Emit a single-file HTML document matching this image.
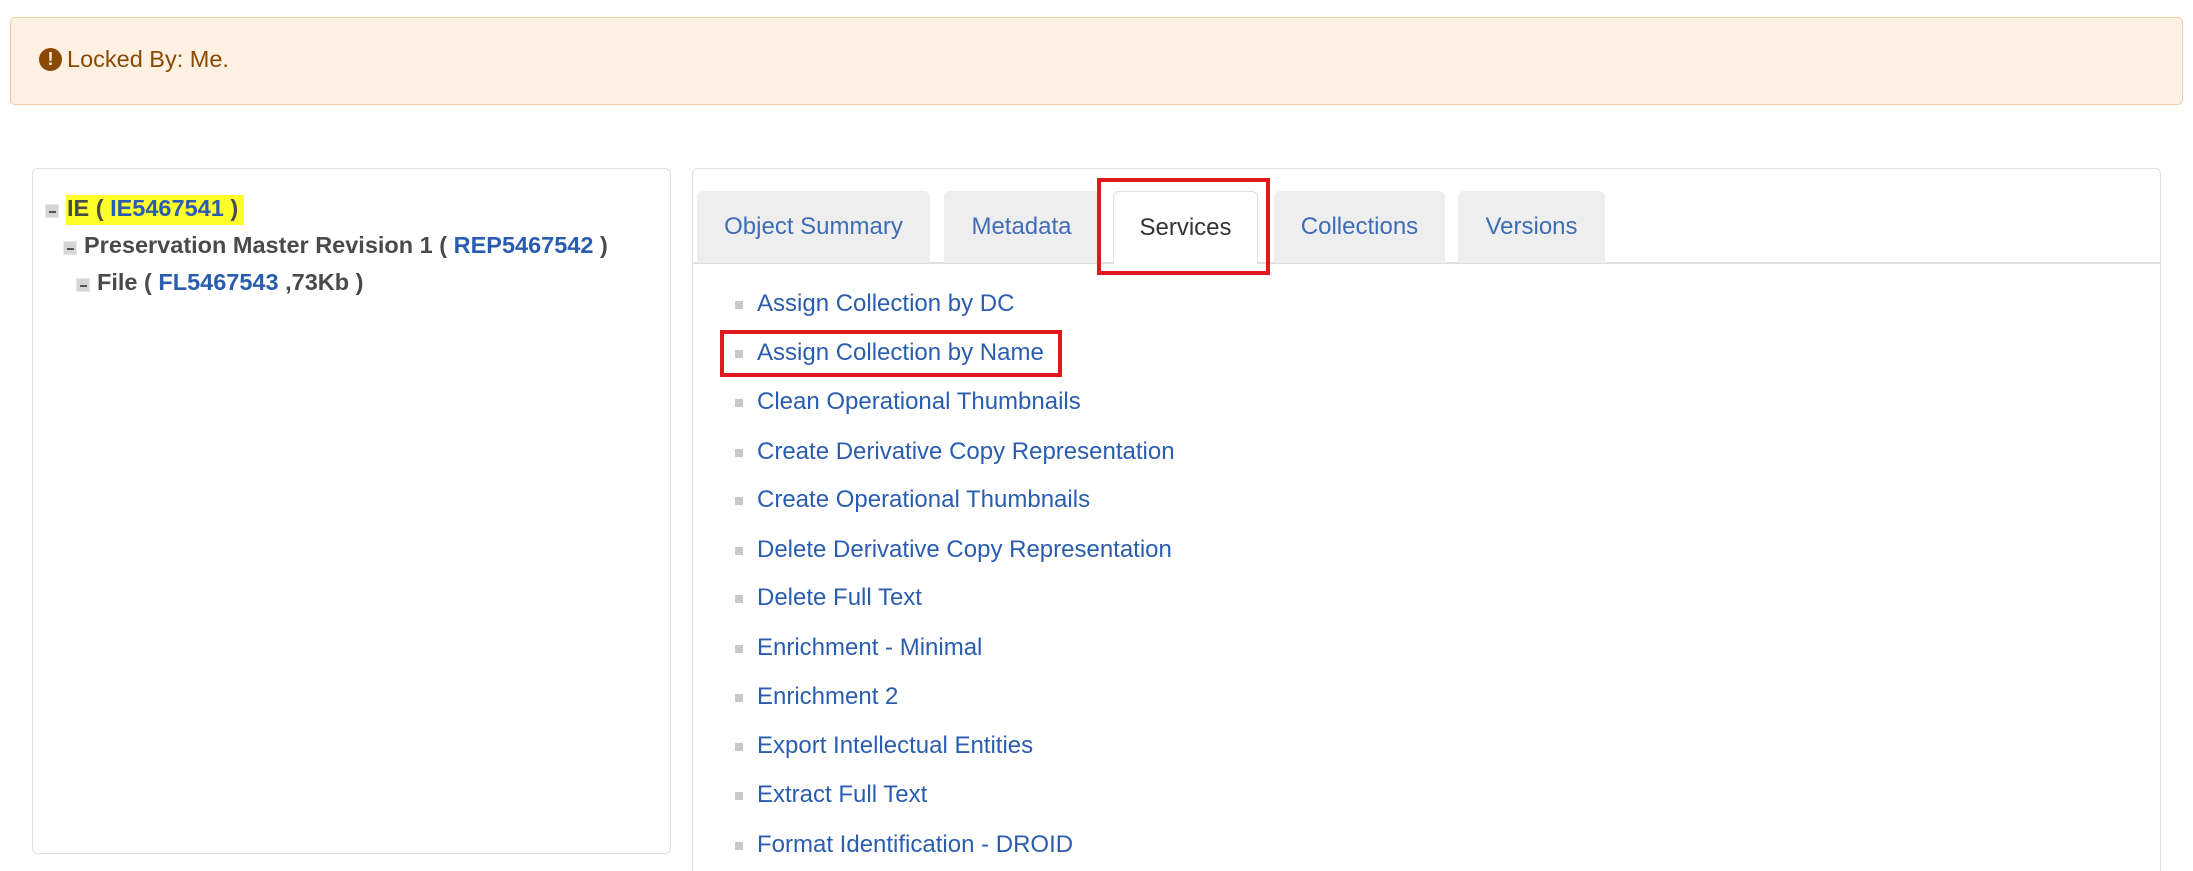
<!DOCTYPE html>
<html style="width:2193px;height:871px;overflow:hidden"><head><meta charset="utf-8"><style>
*{box-sizing:border-box;margin:0;padding:0}
body{width:2193px;height:871px;overflow:hidden;background:#fff;font-family:"Liberation Sans",Arial,sans-serif;position:relative}
.alert{position:absolute;left:10px;top:17px;width:2173px;height:88px;background:#fef1e3;border:1.5px solid #f8c8a4;border-radius:5px}
.alert span{position:absolute;left:56px;top:28px;font-size:23.5px;color:#8a4800}
.alert i{position:absolute;left:28px;top:30px;width:23px;height:23px;border-radius:50%;background:#8a4800;color:#fef1e3;font-style:normal;font-weight:bold;font-size:18px;text-align:center;line-height:23px}
.lp{position:absolute;left:32px;top:168px;width:639px;height:686px;border:1.5px solid #dde0e3;border-radius:6px}
.rp{position:absolute;left:692px;top:168px;width:1469px;height:720px;border:1.5px solid #dde0e3;border-radius:6px}
.tr{position:absolute;font-size:23.5px;font-weight:bold;color:#4a4a4a;white-space:nowrap}
.tr b{color:#2a5db0}
.mn{position:absolute;width:14px;height:14px;background:#d5d5d5;border:1px solid #e8e8e8}
.mn:after{content:"";position:absolute;left:3px;top:6px;width:7px;height:2px;background:#555}
.tab{position:absolute;top:191px;height:72px;background:#eeeeee;border-radius:6px 6px 0 0;font-size:24px;color:#3e6db5;text-align:center;line-height:72px}
.line{position:absolute;left:693px;top:262px;width:1467px;height:1.5px;background:#dde0e3}
.act{background:#fff;border:1.5px solid #dde0e3;border-bottom:none;color:#333}
.li{position:absolute;left:735px;font-size:24px;color:#2a5db0;white-space:nowrap}
.li:before{content:"";position:absolute;left:0;top:11px;width:8px;height:8px;background:#c8c8c8}
.li span{margin-left:22px}
.red{position:absolute;border:4px solid #e0191f}
</style></head><body>
<div class="alert"><i>!</i><span>Locked By: Me.</span></div>
<div class="lp"></div>
<div style="position:absolute;left:66px;top:195px;width:178px;height:30px;background:#ffff2a"></div>
<div class="mn" style="left:45px;top:204px"></div>
<div class="tr" style="left:67px;top:195px">IE ( <b>IE5467541</b> )</div>
<div class="mn" style="left:63px;top:241px"></div>
<div class="tr" style="left:84px;top:232px">Preservation Master Revision 1 ( <b>REP5467542</b> )</div>
<div class="mn" style="left:76px;top:278px"></div>
<div class="tr" style="left:97px;top:269px">File ( <b>FL5467543</b> ,73Kb )</div>
<div class="rp"></div>
<div class="line"></div>
<div class="tab" style="left:697px;width:233px">Object Summary</div>
<div class="tab" style="left:944px;width:155px">Metadata</div>
<div class="tab act" style="left:1113px;width:145px;height:73px">Services</div>
<div class="tab" style="left:1274px;width:171px">Collections</div>
<div class="tab" style="left:1458px;width:147px">Versions</div>
<div class="red" style="left:1097px;top:178px;width:173px;height:97px"></div>
<div class="li" style="top:290px"><span>Assign Collection by DC</span></div>
<div class="li" style="top:339px"><span>Assign Collection by Name</span></div>
<div class="li" style="top:388px"><span>Clean Operational Thumbnails</span></div>
<div class="li" style="top:438px"><span>Create Derivative Copy Representation</span></div>
<div class="li" style="top:486px"><span>Create Operational Thumbnails</span></div>
<div class="li" style="top:536px"><span>Delete Derivative Copy Representation</span></div>
<div class="li" style="top:584px"><span>Delete Full Text</span></div>
<div class="li" style="top:634px"><span>Enrichment - Minimal</span></div>
<div class="li" style="top:683px"><span>Enrichment 2</span></div>
<div class="li" style="top:732px"><span>Export Intellectual Entities</span></div>
<div class="li" style="top:781px"><span>Extract Full Text</span></div>
<div class="li" style="top:831px"><span>Format Identification - DROID</span></div>
<div class="red" style="left:720px;top:330px;width:342px;height:47px"></div>
</body></html>
